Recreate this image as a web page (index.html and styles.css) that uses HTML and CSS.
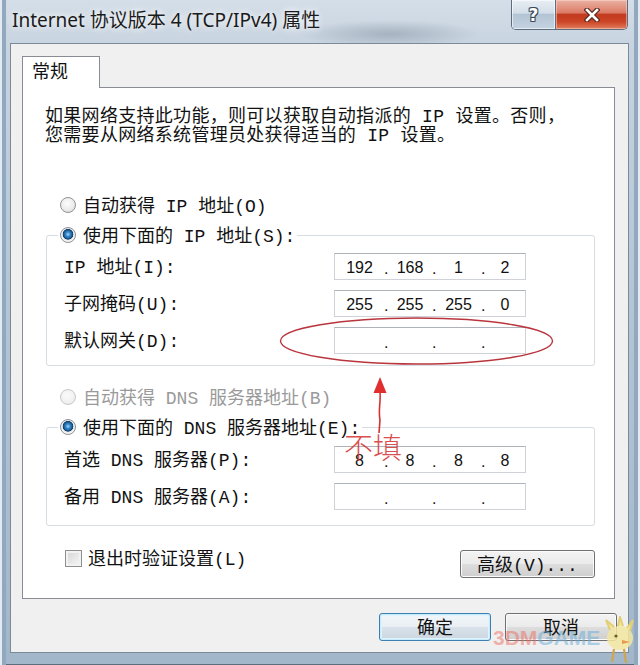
FILE: index.html
```html
<!DOCTYPE html>
<html lang="zh-CN">
<head>
<meta charset="utf-8">
<title>Internet 协议版本 4 (TCP/IPv4) 属性</title>
<link rel="stylesheet" href="styles.css">
</head>
<body>
<div class="window">
  <div class="titlebar">
    <div class="title">Internet 协议版本 4 (TCP/IPv4) 属性</div>
    <div class="caption-btns">
      <div class="cbtn help">?</div>
      <div class="cbtn close">
        <svg width="16" height="14" viewBox="0 0 16 14">
          <path d="M3 2 L13 12 M13 2 L3 12" stroke="#5a2a1e" stroke-width="5" stroke-linecap="square" fill="none"/>
          <path d="M3 2 L13 12 M13 2 L3 12" stroke="#ffffff" stroke-width="2.6" stroke-linecap="square" fill="none"/>
        </svg>
      </div>
    </div>
  </div>
  <div class="client">
    <div class="tabs"><div class="tab">常规</div></div>
    <div class="panel">
      <p class="intro">如果网络支持此功能，则可以获取自动指派的 IP 设置。否则，<br>您需要从网络系统管理员处获得适当的 IP 设置。</p>

      <div class="radio-row first"><span class="radio"></span><span class="txt">自动获得 IP 地址(O)</span></div>
      <fieldset class="group ipgroup">
        <legend><span class="radio checked"></span><span class="txt">使用下面的 IP 地址(S):</span></legend>
        <div class="rows">
          <span class="lbl">IP 地址(I):</span>
          <div class="ip"><span>192</span><i>.</i><span>168</span><i>.</i><span>1</span><i>.</i><span>2</span></div>
          <span class="lbl">子网掩码(U):</span>
          <div class="ip"><span>255</span><i>.</i><span>255</span><i>.</i><span>255</span><i>.</i><span>0</span></div>
          <span class="lbl">默认网关(D):</span>
          <div class="ip"><span></span><i>.</i><span></span><i>.</i><span></span><i>.</i><span></span></div>
        </div>
      </fieldset>

      <div class="radio-row second disabled"><span class="radio"></span><span class="txt">自动获得 DNS 服务器地址(B)</span></div>
      <fieldset class="group dnsgroup">
        <legend><span class="radio checked"></span><span class="txt">使用下面的 DNS 服务器地址(E):</span></legend>
        <div class="rows">
          <span class="lbl">首选 DNS 服务器(P):</span>
          <div class="ip"><span>8</span><i>.</i><span>8</span><i>.</i><span>8</span><i>.</i><span>8</span></div>
          <span class="lbl">备用 DNS 服务器(A):</span>
          <div class="ip"><span></span><i>.</i><span></span><i>.</i><span></span><i>.</i><span></span></div>
        </div>
      </fieldset>

      <div class="bottom-row">
        <div class="check"><span class="checkbox"></span><span class="txt">退出时验证设置(L)</span></div>
        <button class="btn adv">高级(V)...</button>
      </div>
    </div>
    <div class="dialog-btns">
      <button class="btn default">确定</button>
      <button class="btn">取消</button>
    </div>
  </div>
</div>

<div class="annot">
  <svg width="640" height="665" viewBox="0 0 640 665">
    <ellipse cx="416.5" cy="341" rx="136" ry="23" fill="none" stroke="#b9353d" stroke-width="1.4"/>
    <path d="M380 392 C381 402 378 410 380 420 L379 433" fill="none" stroke="#d23434" stroke-width="1.6"/>
    <polygon points="380,377 373.5,393 386.5,393" fill="#e02f2f"/>
  </svg>
  <div class="note">不填</div>
</div>

<div class="watermark">
  <span class="wm-3dm">3DM</span><span class="wm-game">GAME</span>
  <svg class="mascot" width="36" height="50" viewBox="0 0 36 50">
    <ellipse cx="18" cy="22" rx="13" ry="12" fill="#f3e6a0" opacity="0.85"/>
    <path d="M8 14 L4 4 L12 11 M16 10 L18 1 L21 10 M25 12 L31 4 L28 15" stroke="#e2cf72" stroke-width="2" fill="#f3e6a0"/>
    <circle cx="14" cy="20" r="1.6" fill="#6b5a2a"/>
    <path d="M20 24 L28 26 L20 28 Z" fill="#e79a4a"/>
    <path d="M12 33 L10 46 M22 33 L24 47" stroke="#cfa64e" stroke-width="2.2"/>
  </svg>
</div>
</body>
</html>
```
FILE: styles.css
```css
html, body {
  margin: 0;
  padding: 0;
}
body {
  width: 640px;
  height: 665px;
  overflow: hidden;
  position: relative;
  background: #a9bccd;
}

.window {
  box-sizing: border-box;
  width: 640px;
  height: 665px;
  padding: 0 11px 0 10px;
  background:
    radial-gradient(ellipse 90px 14px at 390px 34px, rgba(120,135,150,0.45), rgba(120,135,150,0) 100%),
    linear-gradient(to bottom, #d4dee8 0, #c8d4e0 43px, #b4c5d5 300px, #a3b7ca 100%);
  box-shadow: inset 2px 0 0 #e3ebf2, inset 6px 0 0 #91a8be, inset -2px 0 0 #e3ebf2, inset -6px 0 0 #91a8be, inset 0 -1px 0 #5b6e80;
}

/* ---------- title bar ---------- */
.titlebar {
  height: 43px;
  display: flex;
  justify-content: space-between;
  align-items: flex-start;
}
.title {
  margin: 7px 0 0 2px;
  font-family: "Noto Sans", "Noto Sans CJK SC", sans-serif;
  font-size: 19px;
  line-height: 26px;
  color: #1b1b1b;
  text-shadow: 0 0 6px rgba(255,255,255,0.9), 0 0 10px rgba(255,255,255,0.7);
}
.caption-btns {
  display: flex;
  margin-right: 1px;
  height: 30px;
  border: 1px solid #5d6d7e;
  border-top: none;
  border-radius: 0 0 5px 5px;
  overflow: hidden;
  box-sizing: border-box;
}
.cbtn {
  height: 29px;
  display: flex;
  align-items: center;
  justify-content: center;
}
.help {
  width: 43px;
  border-right: 1px solid #5d6d7e;
  background: linear-gradient(to bottom, #e8eef4 0, #d3dee8 45%, #b3c4d4 50%, #c4d3e0 100%);
  box-shadow: inset 0 0 0 1px rgba(255,255,255,0.6);
  font-family: "DejaVu Sans", sans-serif;
  font-weight: bold;
  font-size: 17px;
  color: #ffffff;
  text-shadow: 0 0 1px #2f3e4d, 1px 1px 0 #3c4b5a, -1px -1px 0 #3c4b5a, 1px -1px 0 #3c4b5a, -1px 1px 0 #3c4b5a;
}
.close {
  width: 71px;
  background: linear-gradient(to bottom, #eab2a4 0, #dc7b66 44%, #c33b20 50%, #cc4526 75%, #e0805f 100%);
  box-shadow: inset 0 0 0 1px rgba(255,220,210,0.5);
}

/* ---------- client area ---------- */
.client {
  box-sizing: border-box;
  height: 610px;
  border: 1px solid #7b8a99;
  background: #f0f0f0;
  padding: 12px 11px 11px 11px;
}
.tabs {
  display: flex;
}
.tab {
  position: relative;
  z-index: 1;
  box-sizing: border-box;
  width: 78px;
  height: 32px;
  margin-bottom: -1px;
  padding: 2px 0 0 9px;
  border: 1px solid #898c95;
  border-bottom: none;
  background: #ffffff;
  font-family: "Liberation Mono", "Noto Sans CJK SC", monospace;
  font-size: 18px;
  line-height: 28px;
  color: #111;
}
.panel {
  box-sizing: border-box;
  height: 512px;
  margin-right: 2px;
  border: 1px solid #898c95;
  background: #ffffff;
  padding: 0 18px 0 22px;
  font-family: "Liberation Mono", "Noto Sans CJK SC", monospace;
  font-size: 18px;
  color: #111;
}
.intro {
  margin: 20px 0 0 0;
  line-height: 19px;
  letter-spacing: 0.3px;
  white-space: nowrap;
}

/* radios */
.radio-row {
  display: flex;
  align-items: center;
  height: 24px;
  padding-left: 15px;
  gap: 7px;
  line-height: 24px;
}
.radio-row.first { margin-top: 47px; }
.radio-row.second { margin-top: 19px; }
.radio-row.disabled { color: #9a9a9a; }
.txt {
  padding-top: 4px;
  line-height: 22px;
  white-space: nowrap;
}

.radio {
  display: inline-block;
  flex: none;
  box-sizing: border-box;
  width: 16px;
  height: 16px;
  border-radius: 50%;
  border: 1px solid #8f9396;
  background: radial-gradient(circle at 45% 40%, #fdfdfd 0, #ececec 55%, #d3d3d3 100%);
}
.disabled .radio {
  border-color: #c6c8ca;
  background: radial-gradient(circle at 45% 40%, #fafafa 0, #f1f1f1 60%, #e4e4e4 100%);
}
.radio.checked {
  background: radial-gradient(circle at 50% 45%, #a7dcf7 0, #3f8fcf 2px, #1c5f9a 4px, #0f3d66 5px, #e2e6ea 5.6px, #f6f6f6 7px);
}

/* group boxes */
.group {
  box-sizing: border-box;
  width: 549px;
  margin: 6px 0 0 1px;
  padding: 0 0 11px 11px;
  border: 1px solid #d5dce2;
  border-radius: 3px;
}
.dnsgroup {
  margin-top: 6px;
  padding-bottom: 15px;
}
.group legend {
  display: flex;
  align-items: center;
  gap: 7px;
  padding: 0 2px;
  height: 24px;
}
.rows {
  display: grid;
  grid-template-columns: 270px 192px;
  grid-auto-rows: 27px;
  row-gap: 10px;
  margin-top: 6px;
  padding-left: 6px;
  align-items: center;
}
.dnsgroup .rows { margin-top: 7px; }
.lbl {
  padding-top: 4px;
  line-height: 27px;
  white-space: nowrap;
}

/* ip address fields */
.ip {
  box-sizing: border-box;
  height: 27px;
  border: 1px solid #cfd2d6;
  border-top-color: #aeb3b9;
  background: #fff;
  display: grid;
  grid-template-columns: 49px 4px 44px 4px 45px 4px 40px;
  align-items: center;
  font-family: "Liberation Sans", "DejaVu Sans", sans-serif;
  font-size: 16px;
  color: #111;
}
.ip span {
  text-align: center;
  line-height: 25px;
}
.ip i {
  font-style: normal;
  text-align: center;
  line-height: 25px;
  padding-top: 2px;
}

/* bottom row */
.bottom-row {
  display: flex;
  justify-content: space-between;
  align-items: flex-start;
  margin-top: 24px;
  height: 28px;
  padding-left: 20px;
  padding-right: 1px;
}
.check {
  display: flex;
  align-items: center;
  gap: 6px;
  height: 19px;
  margin-top: -1px;
}
.check .txt {
  padding-top: 3px;
}
.checkbox {
  box-sizing: border-box;
  width: 17px;
  height: 17px;
  border: 1px solid #8e8f8f;
  background: linear-gradient(135deg, #d4d4d4 0, #e8e8e8 55%, #f6f6f6 100%);
  box-shadow: inset 0 0 0 2px #f2f2f2;
}

/* buttons */
.btn {
  box-sizing: border-box;
  height: 28px;
  padding: 3px 0 0 0;
  border: 1px solid #707070;
  border-radius: 3px;
  background: linear-gradient(to bottom, #f3f3f3 0, #ebebeb 48%, #dddddd 52%, #cfcfcf 100%);
  box-shadow: inset 0 0 0 1px #fbfbfb;
  font-family: "Liberation Mono", "Noto Sans CJK SC", monospace;
  font-size: 18px;
  line-height: 22px;
  color: #111;
}
.adv {
  width: 135px;
}
.dialog-btns {
  display: flex;
  justify-content: flex-end;
  gap: 14px;
  margin-top: 14px;
}
.dialog-btns .btn {
  width: 112px;
}
.btn.default {
  border-color: #3c7fb1;
  background: linear-gradient(to bottom, #f2f6f9 0, #e9eff4 48%, #d9e2ea 52%, #cbd6e0 100%);
  box-shadow: inset 0 0 0 1px #c7ebfb, inset 0 0 0 2px #dff3fc;
}

/* annotation overlay */
.annot {
  position: absolute;
  left: 0;
  top: 0;
  width: 640px;
  height: 665px;
  pointer-events: none;
}
.annot svg {
  position: absolute;
  left: 0;
  top: 0;
}
.note {
  position: absolute;
  left: 344px;
  top: 430px;
  font-family: "Noto Sans CJK SC", sans-serif;
  font-weight: 300;
  font-size: 29px;
  line-height: 32px;
  color: #d63c3c;
  opacity: 0.9;
}

/* watermark */
.watermark {
  position: absolute;
  left: 493px;
  top: 626px;
  display: flex;
  align-items: flex-start;
  font-family: "Liberation Sans", sans-serif;
  font-weight: bold;
  font-size: 21px;
  line-height: 24px;
  pointer-events: none;
}
.wm-3dm { color: rgba(236, 110, 100, 0.5); }
.wm-game { color: rgba(110, 175, 220, 0.55); }
.mascot {
  margin: -10px 0 0 2px;
}
```
